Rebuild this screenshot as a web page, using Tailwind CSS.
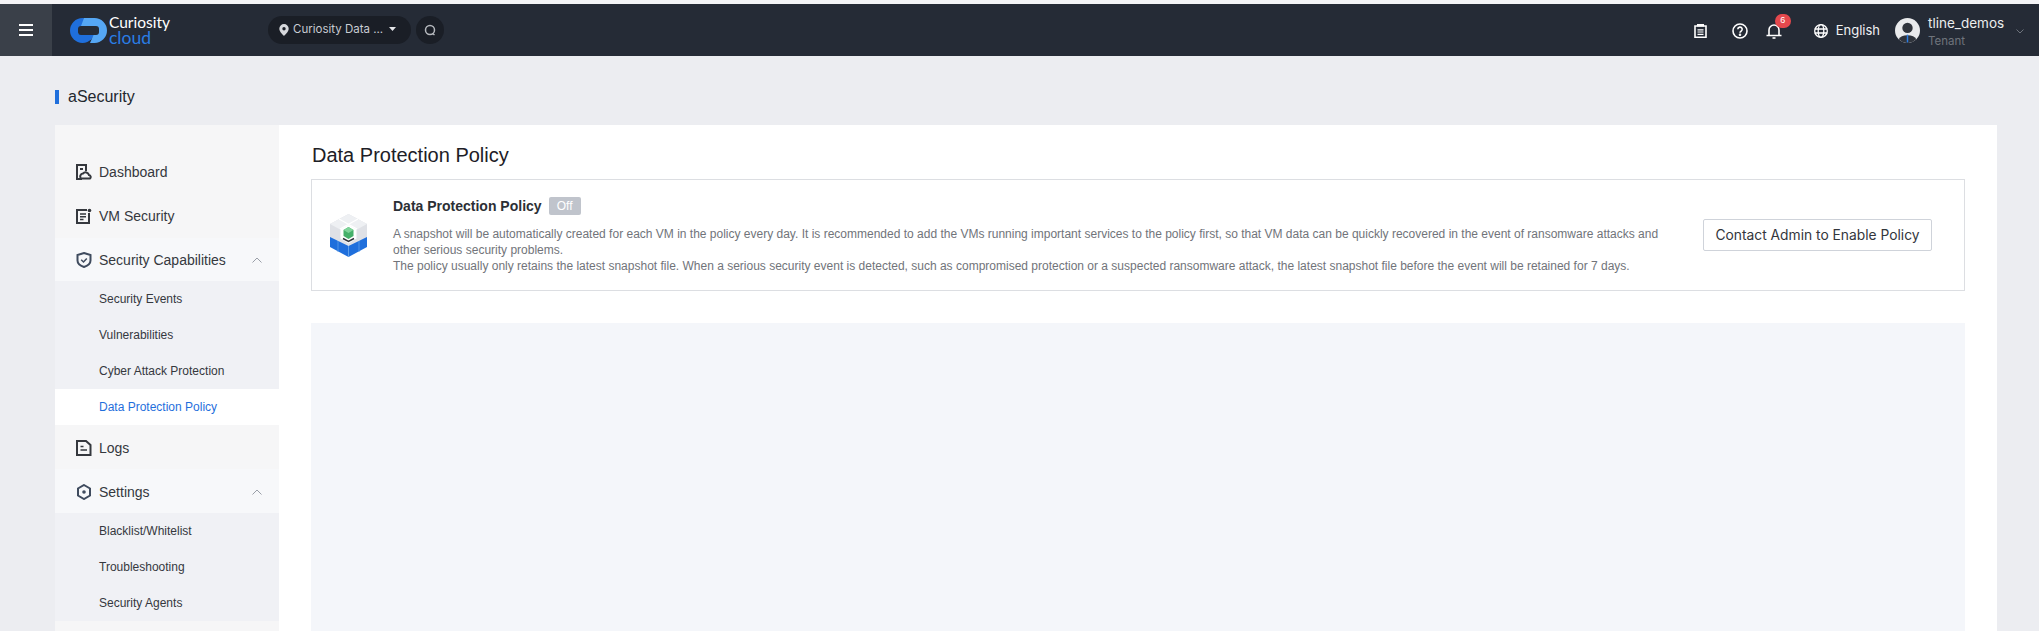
<!DOCTYPE html>
<html>
<head>
<meta charset="utf-8">
<script src="https://cdn.jsdelivr.net/npm/@tailwindcss/browser@4"></script>
</head>
<body class="h-[631px] overflow-hidden bg-[#ecedf1] font-['Liberation_Sans',sans-serif]">
<div class="h-[4px] bg-[#f4f4f6]"></div>
<header class="flex h-[52px] items-center bg-[#252b36] text-white">
  <div class="flex h-full w-[52px] items-center justify-center bg-[#3a4049]">
    <svg width="16" height="14" viewBox="0 0 16 14" fill="none" stroke="#fff" stroke-width="2"><path d="M1 2h14M1 7h14M1 12h14"/></svg>
  </div>
  <div class="ml-[18px] flex w-[198px] items-center">
    <svg width="37" height="25" viewBox="0 0 37 25"><circle cx="12.500" cy="12.500" r="12.500" fill="#1f6fdc"/><path d="M14 0h10.500a12.500 12.500 0 0 1 0 25H20l4-9H8L14 0z" fill="#55a7f5"/><rect x="8" y="8" width="21" height="9" rx="3" fill="#252b36"/></svg>
    <div class="ml-[2px] flex flex-col font-['Lato',sans-serif]">
      <span class="text-[15.500px] leading-[15px] text-white">Curiosity</span>
      <span class="text-[17.500px] leading-[15px] text-[#2a7de5]">cloud</span>
    </div>
  </div>
  <div class="flex h-[28px] w-[143px] items-center rounded-full bg-[#1a1e26] pl-[11px] text-[12px] text-[#c9ccd2]">
    <svg width="10" height="12" viewBox="0 0 10 12" fill="#d6d8dc"><path fill-rule="evenodd" d="M5 0a4.700 4.700 0 0 1 4.700 4.700C9.700 7.800 5 12 5 12S.3 7.800.3 4.700A4.700 4.700 0 0 1 5 0zm0 3a1.700 1.700 0 1 0 0 3.400A1.700 1.700 0 0 0 5 3z"/></svg>
    <span class="ml-[4px] font-['Inter',sans-serif] text-[11.500px]">Curiosity Data ...</span>
    <svg class="ml-[6px] mb-[2px]" width="7" height="4" viewBox="0 0 7 4" fill="#e4e5e8"><path d="M0 0h7L3.500 4z"/></svg>
  </div>
  <div class="ml-[5px] flex h-[28px] w-[28px] items-center justify-center rounded-full bg-[#1a1e26]">
    <svg width="12" height="12" viewBox="0 0 12 12" fill="none" stroke="#b5b8bd" stroke-width="1.500"><circle cx="6" cy="6" r="4.500"/><path d="M8.500 9.500l2 1.500"/></svg>
  </div>
  <div class="ml-auto mt-[2px] flex items-center">
    <svg width="13" height="14" viewBox="0 0 13 14" fill="none" stroke="#fff" stroke-width="1.600"><path d="M1 2h11v11.200H1z"/><path d="M3.500 5.800h6M3.500 8h6M3.500 10.300h6" stroke-width="1.200"/><path d="M3 0h7v2.500H3z" fill="#fff" stroke="none"/></svg>
    <svg class="ml-[25px]" width="16" height="16" viewBox="0 0 16 16" fill="none" stroke="#fff" stroke-width="1.600"><circle cx="8" cy="8" r="7"/><path d="M5.800 6.300a2.200 2.200 0 1 1 3.300 1.900c-.7.400-1.100.8-1.100 1.600"/><circle cx="8" cy="11.800" r=".5" fill="#fff"/></svg>
    <div class="relative ml-[18px] h-[16px] w-[16px]">
      <svg width="16" height="16" viewBox="0 0 16 16" fill="none" stroke="#fff" stroke-width="1.600"><path d="M.5 12.500h15M3 12.500V7a5 5 0 0 1 10 0v5.500"/><path d="M6.500 15h3"/></svg>
      <span class="absolute left-[9px] top-[-9px] flex h-[14px] w-[16px] items-center justify-center rounded-full bg-[#e5484d] text-[9px] text-white">6</span>
    </div>
    <svg class="ml-[32px]" width="14" height="14" viewBox="0 0 14 14" fill="none" stroke="#fff" stroke-width="1.300"><circle cx="7" cy="7" r="6.300"/><ellipse cx="7" cy="7" rx="2.800" ry="6.300"/><path d="M.7 5h12.600M.7 9h12.600"/></svg>
    <span class="ml-[8px] font-['Inter',sans-serif] text-[13px] text-[#f0f1f2]">English</span>
    <svg class="ml-[15px] mb-[2px]" width="25" height="25" viewBox="0 0 24 24"><circle cx="12" cy="12" r="12" fill="#e9eaec"/><circle cx="12" cy="9.500" r="5" fill="#30343c"/><path d="M3.500 20.500a9 6 0 0 1 17 0A12 12 0 0 1 3.500 20.500z" fill="#30343c"/><path d="M11.300 16h1.400v7.500h-1.400z" fill="#2a7de5"/></svg>
    <div class="ml-[8px] mt-[2px] flex w-[77px] flex-col font-['Inter',sans-serif]">
      <span class="text-[13.500px] leading-[18px] text-[#eceded]">tline_demos</span>
      <span class="text-[11.500px] leading-[18px] text-[#6f747c]">Tenant</span>
    </div>
    <svg class="ml-[11px] mr-[15px]" width="8" height="5" viewBox="0 0 8 5" fill="none" stroke="#6f747c"><path d="M.5.500L4 4 7.500.500"/></svg>
  </div>
</header>

<div class="ml-[55px] flex h-[69px] items-center pt-[13px]">
  <span class="h-[14px] w-[4px] bg-[#1f6fdc]"></span>
  <h1 class="ml-[9px] text-[16px] text-[#23272e]">aSecurity</h1>
</div>

<main class="ml-[55px] mr-[42px] flex h-[506px] overflow-hidden bg-white">
  <aside class="w-[224px] shrink-0 bg-[#f6f6f7] pt-[25px] text-[14px] text-[#35383e]">
    <div class="flex h-[44px] items-center pl-[21px]">
      <svg width="16" height="16" viewBox="0 0 16 16" fill="none" stroke="#35383e" stroke-width="2"><path d="M6 15H1V1h9v6"/><path d="M4 5h3" /><path d="M5 14.500a3 3 0 0 1 2-5 3.500 3.500 0 0 1 6 1.500 2 2 0 0 1 1 3.500z"/></svg>
      <span class="ml-[7px]">Dashboard</span>
    </div>
    <div class="flex h-[44px] items-center pl-[21px]">
      <svg width="16" height="16" viewBox="0 0 16 16" fill="none" stroke="#35383e" stroke-width="2"><path d="M11 2H1v13h12V5"/><path d="M4 6h6M4 8.800h6M4 11.500h3.500" stroke-width="1.400"/><circle cx="13.500" cy="2.500" r="1.800" fill="#35383e" stroke="none"/></svg>
      <span class="ml-[7px]">VM Security</span>
    </div>
    <div class="flex h-[43px] items-center bg-[#f7f8fa] pl-[21px] pr-[17px] pt-[1px]">
      <svg width="16" height="16" viewBox="0 0 16 16" fill="none" stroke="#3f4b5e" stroke-width="2"><path d="M8 1l6.500 2v5.500C14.500 12 11 14 8 15c-3-1-6.500-3-6.500-6.500V3z"/><path d="M5.200 7.800L7.500 10l3.300-3.600" stroke-width="1.500"/></svg>
      <span class="ml-[7px]">Security Capabilities</span>
      <svg class="ml-auto" width="10" height="6" viewBox="0 0 10 6" fill="none" stroke="#9a9fa8"><path d="M.5 5.500L5 1l4.500 4.500"/></svg>
    </div>
    <div class="bg-[#f0f1f5] text-[12px]">
      <div class="flex h-[36px] items-center pl-[44px]">Security Events</div>
      <div class="flex h-[36px] items-center pl-[44px]">Vulnerabilities</div>
      <div class="flex h-[36px] items-center pl-[44px]">Cyber Attack Protection</div>
      <div class="flex h-[36px] items-center bg-white pl-[44px] text-[#1f6fdc]">Data Protection Policy</div>
    </div>
    <div class="flex h-[44px] items-center pl-[21px] pt-[2px]">
      <svg width="16" height="16" viewBox="0 0 16 16" fill="none" stroke="#35383e" stroke-width="2"><path d="M1 1h9l4.500 4v10H1z"/><path d="M4.500 6.500h3M4.500 10h6.500" stroke-width="1.600"/></svg>
      <span class="ml-[7px]">Logs</span>
    </div>
    <div class="flex h-[44px] items-center bg-[#f7f8fa] pl-[21px] pr-[17px] pt-[2px]">
      <svg width="16" height="16" viewBox="0 0 16 16" fill="none" stroke="#3f4b5e" stroke-width="2"><path d="M8 1l6 3.500v7L8 15l-6-3.500v-7z"/><circle cx="8" cy="8" r="1.800" fill="#3f4b5e" stroke="none"/></svg>
      <span class="ml-[7px]">Settings</span>
      <svg class="ml-auto" width="10" height="6" viewBox="0 0 10 6" fill="none" stroke="#9a9fa8"><path d="M.5 5.500L5 1l4.500 4.500"/></svg>
    </div>
    <div class="bg-[#f0f1f5] text-[12px]">
      <div class="flex h-[36px] items-center pl-[44px]">Blacklist/Whitelist</div>
      <div class="flex h-[36px] items-center pl-[44px]">Troubleshooting</div>
      <div class="flex h-[36px] items-center pl-[44px]">Security Agents</div>
    </div>
  </aside>
  <section class="flex-1 px-[32px]">
    <h2 class="ml-[1px] pt-[18px] text-[20px] leading-[24px] text-[#1d2026]">Data Protection Policy</h2>
    <div class="mt-[12px] flex h-[112px] items-center border border-[#dcdee2] pl-[16px] pr-[32px]">
      <svg class="shrink-0" width="41" height="44" viewBox="0 0 41 44">
        <path d="M2 22l18.500 10L39 22v12l-18.500 10L2 34z" fill="#1f6fdc"/>
        <path d="M20.500 32v12" stroke="#5e9ee8" stroke-width="1"/><path d="M10 26v13M31 26v13" stroke="#5e9ee8" stroke-width=".8"/>
        <path d="M2 11L20.500 1 39 11v13l-18.500 9L2 24z" fill="#dfe1e6"/>
        <path d="M2 11l18.500 10L39 11 20.500 1z" fill="#eef0f3"/>
        <path d="M11 6l18 10M30 6L12 16" stroke="#fff" stroke-width="1.200"/>
        <path d="M20.500 12l8 4.500v9l-8 5-8-5v-9z" fill="#fff"/>
        <path d="M20.500 14l5 3v6l-5 3-5-3v-6z" fill="#45b06a"/>
        <path d="M15.500 17l5 3 5-3-5-3z" fill="#7fd39a"/>
        <path d="M15 25.500l5.500 3 5.500-3-5.500 3z" stroke="#30343c" stroke-width="1.500"/>
      </svg>
      <div class="ml-[24px] min-w-0 flex-1 pr-[29px]">
        <div class="flex items-center">
          <h3 class="text-[14px] font-bold leading-[18px] text-[#2c2f35]">Data Protection Policy</h3>
          <span class="ml-[7px] flex h-[18px] w-[32px] items-center justify-center rounded-[2px] bg-[#c0c4cc] text-[12px] text-white">Off</span>
        </div>
        <p class="mt-[11px] text-[12px] leading-[16px] text-[#71747a]">A snapshot will be automatically created for each VM in the policy every day. It is recommended to add the VMs running important services to the policy first, so that VM data can be quickly recovered in the event of ransomware attacks and other serious security problems.<br>The policy usually only retains the latest snapshot file. When a serious security event is detected, such as compromised protection or a suspected ransomware attack, the latest snapshot file before the event will be retained for 7 days.</p>
      </div>
      <button class="flex h-[32px] w-[229px] shrink-0 items-center justify-center rounded-[2px] border border-[#cfd3da] font-['Inter',sans-serif] text-[13.800px] text-[#33363c]">Contact Admin to Enable Policy</button>
    </div>
    <div class="mt-[32px] h-[320px] bg-[#f4f6fa]"></div>
  </section>
</main>
</body>
</html>
